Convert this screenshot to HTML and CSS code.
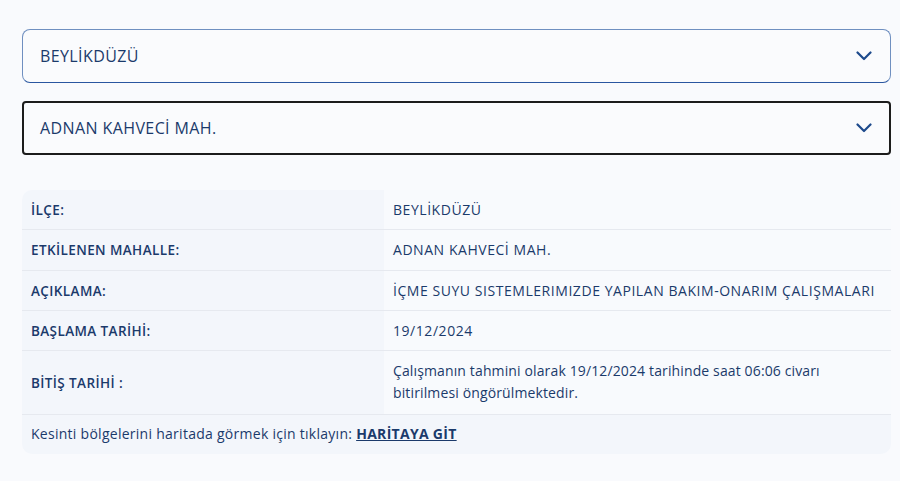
FILE: index.html
```html
<!DOCTYPE html>
<html lang="tr">
<head>
<meta charset="utf-8">
<title>Kesinti</title>
<link rel="stylesheet" href="styles.css">
</head>
<body>
<main class="page">
  <div class="select select-primary">
    <span class="select-text">BEYLİKDÜZÜ</span>
    <svg class="chevron" width="16" height="10" viewBox="0 0 16 10"><path d="M1.5 1.5 L8 8 L14.5 1.5" fill="none" stroke="#1d4a8c" stroke-width="2.2" stroke-linecap="round" stroke-linejoin="round"/></svg>
  </div>
  <div class="select select-focus">
    <span class="select-text">ADNAN KAHVECİ MAH.</span>
    <svg class="chevron" width="16" height="10" viewBox="0 0 16 10"><path d="M1.5 1.5 L8 8 L14.5 1.5" fill="none" stroke="#1d4a8c" stroke-width="2.2" stroke-linecap="round" stroke-linejoin="round"/></svg>
  </div>

  <section class="info">
    <div class="row">
      <div class="label">İLÇE:</div>
      <div class="value">BEYLİKDÜZÜ</div>
    </div>
    <div class="row">
      <div class="label">ETKİLENEN MAHALLE:</div>
      <div class="value">ADNAN KAHVECİ MAH.</div>
    </div>
    <div class="row">
      <div class="label">AÇIKLAMA:</div>
      <div class="value">İÇME SUYU SISTEMLERIMIZDE YAPILAN BAKIM-ONARIM ÇALIŞMALARI</div>
    </div>
    <div class="row">
      <div class="label">BAŞLAMA TARİHİ:</div>
      <div class="value">19/12/2024</div>
    </div>
    <div class="row row-tall">
      <div class="label">BİTİŞ TARİHİ :</div>
      <div class="value value-text">Çalışmanın tahmini olarak 19/12/2024 tarihinde saat 06:06 civarı<br>bitirilmesi öngörülmektedir.</div>
    </div>
    <div class="footer">Kesinti bölgelerini haritada görmek için tıklayın: <a class="map-link" href="#">HARİTAYA GİT</a></div>
  </section>
</main>
</body>
</html>
```

FILE: styles.css
```css
* { box-sizing: border-box; }
html, body { margin: 0; padding: 0; }
body {
  background: #f9fafd;
  font-family: "Open Sans", "Lato", sans-serif;
  color: #1b3a6b;
}
.page {
  padding: 29px 9px 0 22px;
}
.select {
  height: 54px;
  display: flex;
  align-items: center;
  justify-content: space-between;
  padding: 0 18px 0 17px;
  background: #fafbfd;
  font-size: 16px;
}
.select-primary {
  border: 1px solid #6f8fc0;
  border-bottom-color: #2a56a0;
  border-radius: 8px;
}
.select-focus {
  margin-top: 18px;
  border: 2px solid #1c1c1c;
  border-radius: 4px;
  padding: 0 17px 0 16px;
}
.select-text { letter-spacing: 0.4px; }
.chevron { display: block; }

.info {
  margin-top: 35px;
  border-radius: 10px;
  overflow: hidden;
  font-size: 14px;
}
.row {
  display: grid;
  grid-template-columns: 362px 1fr;
  border-bottom: 1px solid #e6e9ef;
}
.label {
  background: #f3f6fb;
  padding: 9px 9px 8px;
  line-height: 22.25px;
  font-weight: 600;
  font-size: 13.5px;
  letter-spacing: 0.4px;
  display: flex;
  align-items: center;
}
.value {
  background: #f8fafd;
  padding: 9px 9px 8px;
  line-height: 22.25px;
  letter-spacing: 0.55px;
}
.value-text { letter-spacing: 0.13px; }
.row-tall .value { padding-bottom: 9px; }
.footer {
  background: #f3f6fb;
  padding: 8px 9px 9px;
  line-height: 22px;
  letter-spacing: 0.27px;
}
.map-link {
  color: #1b3a6b;
  font-weight: 700;
  text-decoration: underline;
  letter-spacing: 0.3px;
}
```
